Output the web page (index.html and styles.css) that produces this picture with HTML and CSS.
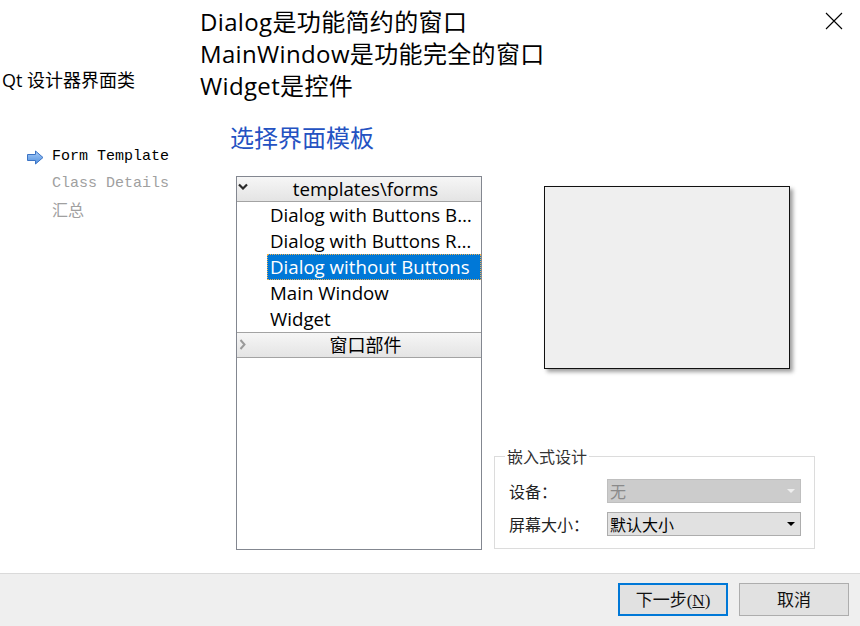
FILE: index.html
```html
<!DOCTYPE html>
<html lang="zh-CN">
<head>
<meta charset="utf-8">
<title>Qt 设计器界面类</title>
<link rel="stylesheet" href="styles.css">
</head>
<body>
<div class="window">
  <div class="main">
    <aside class="side">
      <div class="side-title">Qt 设计器界面类</div>
      <ul class="steps">
        <li class="step current">
          <svg class="step-arrow" width="17" height="15" viewBox="0 0 17 15">
            <defs>
              <linearGradient id="ag" x1="0" y1="0" x2="0" y2="1">
                <stop offset="0" stop-color="#a9cdf7"/>
                <stop offset="1" stop-color="#4f8fe0"/>
              </linearGradient>
            </defs>
            <polygon points="0.5,4.5 8.5,4.5 8.5,1 16,7.5 8.5,14 8.5,10.5 0.5,10.5" fill="url(#ag)" stroke="#3b73c4" stroke-width="1" stroke-linejoin="round"/>
          </svg>
          <span>Form Template</span>
        </li>
        <li class="step">Class Details</li>
        <li class="step step-cjk">汇总</li>
      </ul>
    </aside>
    <section class="content">
      <div class="top">
        <div class="note">Dialog是功能简约的窗口<br>MainWindow是功能完全的窗口<br>Widget是控件</div>
        <button class="close" aria-label="关闭">
          <svg width="18" height="18" viewBox="0 0 18 18"><path d="M1 1 L17 17 M17 1 L1 17" stroke="#000" stroke-width="1.1" fill="none"/></svg>
        </button>
      </div>
      <h1 class="title">选择界面模板</h1>
      <div class="body">
        <div class="tree">
          <div class="tree-head">
            <svg class="chev" width="10" height="7" viewBox="0 0 10 7"><path d="M1 1.5 L5 5.5 L9 1.5" stroke="#2a2a2a" stroke-width="2.2" fill="none"/></svg>
            <span>templates\forms</span>
          </div>
          <div class="tree-item">Dialog with Buttons B…</div>
          <div class="tree-item">Dialog with Buttons R…</div>
          <div class="tree-item selected">Dialog without Buttons</div>
          <div class="tree-item">Main Window</div>
          <div class="tree-item">Widget</div>
          <div class="tree-head head-widgets">
            <svg class="chev chev-right" width="7" height="11" viewBox="0 0 7 11"><path d="M1.5 1 L5.5 5.5 L1.5 10" stroke="#9a9a9a" stroke-width="2" fill="none"/></svg>
            <span>窗口部件</span>
          </div>
        </div>
        <div class="right">
          <div class="preview"></div>
          <fieldset class="embed">
            <legend class="embed-title">嵌入式设计</legend>
            <div class="embed-grid">
              <label class="embed-label">设备：</label>
              <div class="combo disabled"><span>无</span><i class="combo-arrow"></i></div>
              <label class="embed-label">屏幕大小：</label>
              <div class="combo"><span>默认大小</span><i class="combo-arrow"></i></div>
            </div>
          </fieldset>
        </div>
      </div>
    </section>
  </div>
  <footer class="footer">
    <button class="btn primary">下一步(<u>N</u>)</button>
    <button class="btn">取消</button>
  </footer>
</div>
</body>
</html>
```

FILE: styles.css
```css
* { box-sizing: border-box; }

html, body {
  margin: 0;
  padding: 0;
  background: #ffffff;
}

body {
  width: 860px;
  height: 626px;
  overflow: hidden;
  font-family: "Open Sans", "Noto Sans CJK SC", sans-serif;
  color: #000;
}

.window {
  display: flex;
  flex-direction: column;
  height: 626px;
}

.main {
  display: flex;
  height: 573px;
}

/* ---------- side ---------- */
.side {
  width: 200px;
  flex: none;
  padding-top: 68px;
}

.side-title {
  font-family: "Open Sans", "Noto Sans CJK SC", sans-serif;
  font-size: 18px;
  line-height: 24px;
  padding-left: 2px;
  white-space: nowrap;
}

.steps {
  list-style: none;
  margin: 52px 0 0;
  padding: 0 0 0 52px;
}

.step {
  position: relative;
  height: 26.5px;
  line-height: 26px;
  font-family: "Liberation Mono", "Noto Sans CJK SC", monospace;
  font-size: 15px;
  color: #a0a0a0;
  white-space: nowrap;
}

.step.current {
  color: #000;
  display: flex;
  align-items: center;
  margin-left: -25px;
  gap: 8px;
}

.step-arrow { flex: none; display: block; }

.step-cjk {
  font-family: "Noto Sans CJK SC", sans-serif;
  font-size: 16px;
  line-height: 24px;
}

/* ---------- content ---------- */
.content {
  flex: 1;
  display: flex;
  flex-direction: column;
}

.top {
  display: flex;
  justify-content: space-between;
  align-items: flex-start;
  padding-top: 6px;
}

.note {
  font-size: 24px;
  line-height: 32px;
  letter-spacing: 0.35px;
  white-space: nowrap;
}

.close {
  margin: 6px 17px 0 0;
  padding: 0;
  border: 0;
  background: transparent;
  width: 18px;
  height: 18px;
}
.close svg { display: block; }

.title {
  margin: 20px 0 0 30px;
  font-family: "Noto Sans CJK SC", sans-serif;
  font-weight: 400;
  font-size: 24px;
  line-height: 30px;
  color: #2452c2;
}

.body {
  display: flex;
  gap: 12px;
  margin-top: 24px;
  padding-left: 36px;
  height: 374px;
}

/* ---------- tree ---------- */
.tree {
  width: 246px;
  height: 374px;
  border: 1px solid #838790;
  background: #fff;
  font-size: 18.7px;
  overflow: hidden;
}

.tree-head {
  position: relative;
  height: 25px;
  line-height: 23px;
  border-bottom: 1px solid #a3a3a3;
  background: linear-gradient(#f6f6f6, #e4e4e4);
  text-align: center;
  white-space: nowrap;
  padding-left: 13px;
}

.head-widgets {
  height: 26px;
  line-height: 25px;
  border-top: 1px solid #a3a3a3;
  font-size: 18px;
}

.chev {
  position: absolute;
  left: 1px;
  top: 6px;
}
.chev-right { left: 2px; top: 6px; }

.tree-item {
  height: 26px;
  line-height: 25px;
  margin-left: 30px;
  padding-left: 3px;
  white-space: nowrap;
  overflow: hidden;
}

.tree-item.selected {
  background: #0078d7;
  color: #fff;
  outline: 1px dotted #f0b050;
  outline-offset: -1px;
}

/* ---------- right ---------- */
.right {
  width: 321px;
  display: flex;
  flex-direction: column;
}

.preview {
  margin: 10px 0 0 50px;
  width: 246px;
  height: 183px;
  background: #efefef;
  border: 1px solid #111;
  box-shadow: 3px 3px 4px rgba(0, 0, 0, 0.38);
}

.embed {
  margin: auto 0 1px;
  padding: 0 12px 12px 14px;
  border: 1px solid #dcdcdc;
  min-width: 0;
  font-family: "Noto Sans CJK SC", sans-serif;
  font-size: 16px;
}

.embed-title {
  padding: 0 2px;
  margin-left: -4px;
  line-height: 20px;
  color: #333;
}

.embed-grid {
  display: grid;
  grid-template-columns: 98px 194px;
  row-gap: 9px;
  margin-top: 13px;
  align-items: center;
}

.embed-label {
  color: #222;
  white-space: nowrap;
}

.combo {
  position: relative;
  height: 24px;
  line-height: 22px;
  border: 1px solid #adadad;
  background: #e1e1e1;
  padding-left: 2px;
  color: #000;
}

.combo.disabled {
  background: #cccccc;
  border-color: #bfbfbf;
  color: #8a8a8a;
}

.combo-arrow {
  position: absolute;
  right: 5px;
  top: 9px;
  width: 0;
  height: 0;
  border-left: 4px solid transparent;
  border-right: 4px solid transparent;
  border-top: 4px solid #000;
}
.combo.disabled .combo-arrow { border-top-color: #efefef; }

/* ---------- footer ---------- */
.footer {
  height: 53px;
  border-top: 1px solid #dadada;
  background: #efefef;
  display: flex;
  justify-content: flex-end;
  align-items: flex-start;
  gap: 11px;
  padding: 9px 11px 0 0;
}

.btn {
  width: 110px;
  height: 33px;
  border: 1px solid #adadad;
  background: #e1e1e1;
  font-family: "Liberation Serif", "Noto Sans CJK SC", serif;
  font-size: 17px;
  color: #111;
  padding: 0 0 3px;
}

.btn.primary {
  border: 2px solid #0078d7;
}
```
